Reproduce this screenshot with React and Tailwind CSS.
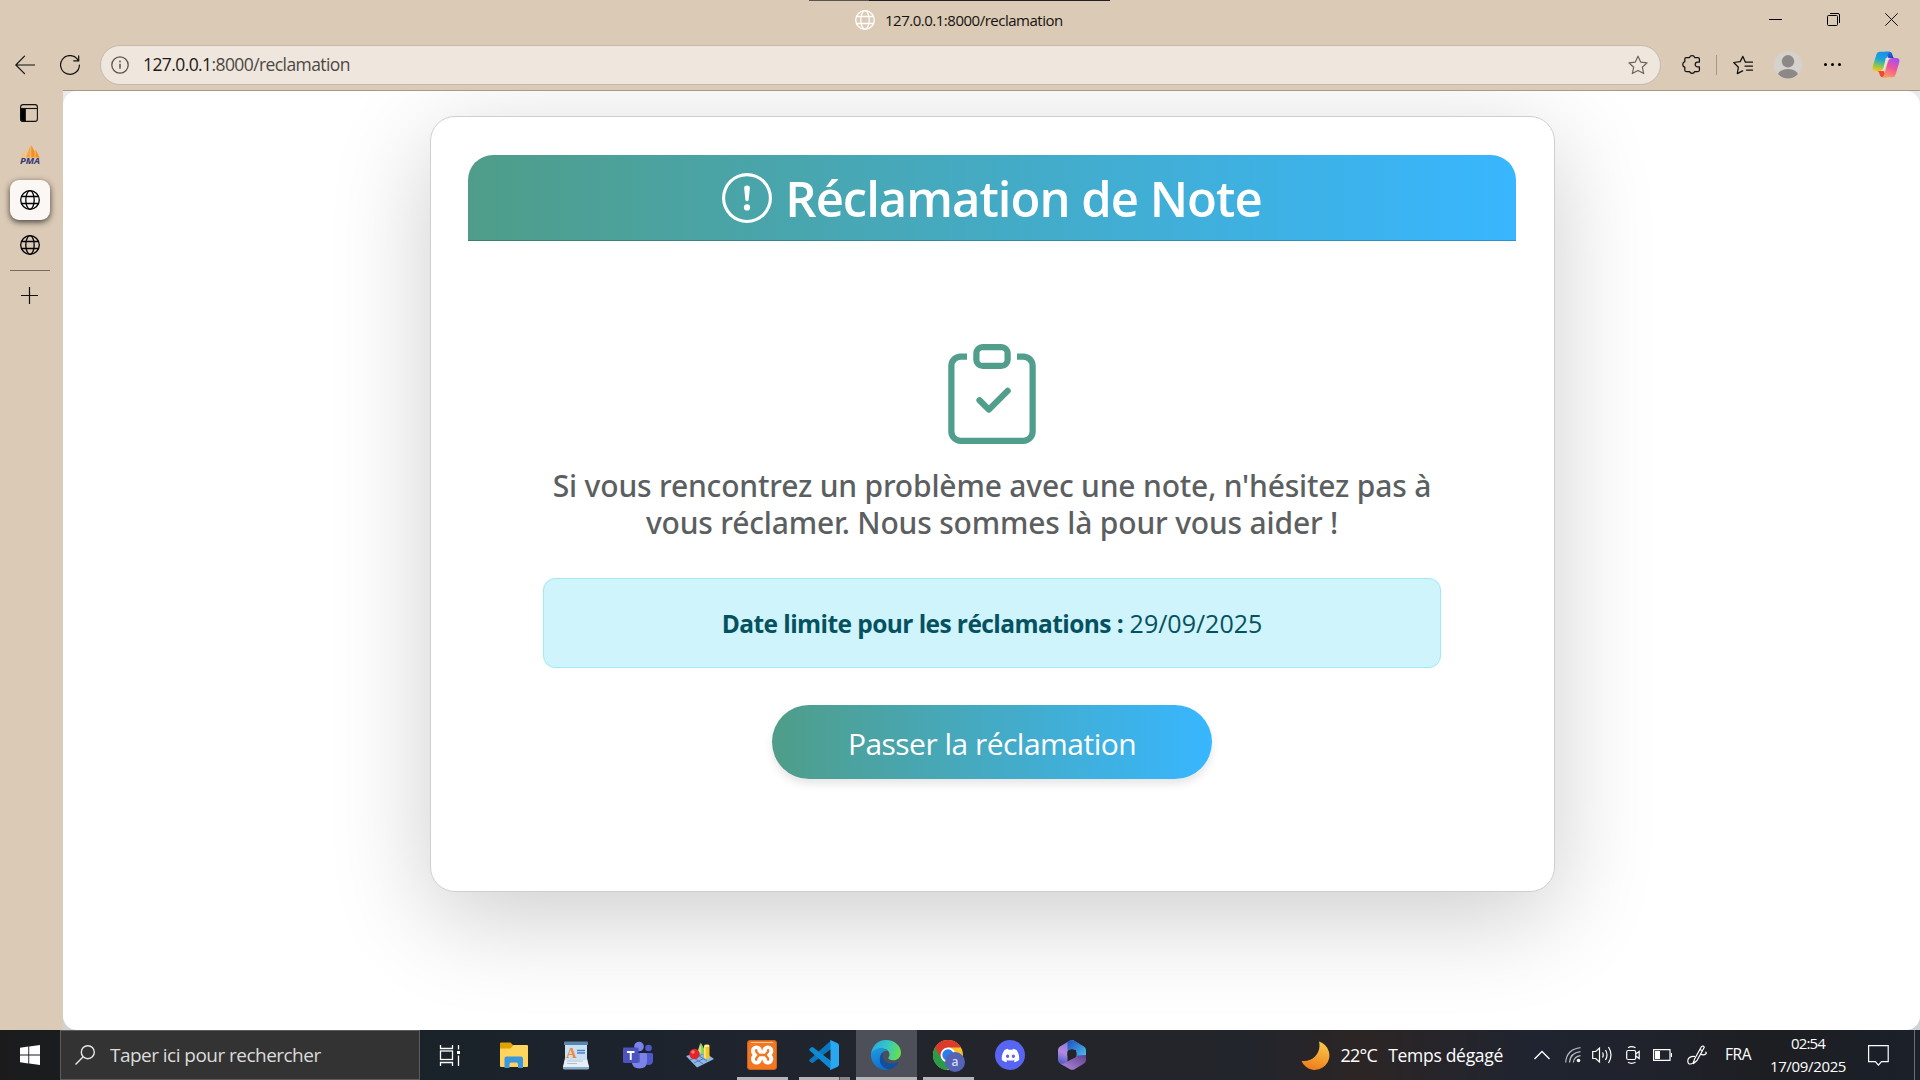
import React from 'react';
import { BsClipboardCheck, BsExclamationCircle } from 'react-icons/bs';
import { FaDiscord } from 'react-icons/fa6';

/* ---------- Browser icons ---------- */

function Globe({ className = '' }) {
  return (
    <svg viewBox="0 0 20 20" className={`size-5 shrink-0 ${className}`} fill="none" stroke="currentColor" strokeWidth="1.3">
      <circle cx="10" cy="10" r="9.3" />
      <ellipse cx="10" cy="10" rx="4.2" ry="9.3" />
      <path d="M1.3 6.5h17.4M1.3 13.5h17.4" />
    </svg>
  );
}

const STAR = 'M10 1.2l2.7 5.9 6.4.7-4.8 4.4 1.4 6.4L10 15.4l-5.7 3.2 1.4-6.4L.9 7.8l6.4-.7z';

function Back() {
  return (
    <svg viewBox="0 0 20 20" className="size-5" fill="none" stroke="#111" strokeWidth="1.2" strokeLinecap="round">
      <path d="M19.5 10H.8M9.5 1.2L.8 10l8.7 8.6" />
    </svg>
  );
}

function Reload() {
  return (
    <svg viewBox="0 0 20 20" className="size-5" fill="none" stroke="#111" strokeWidth="1.2" strokeLinecap="round">
      <path d="M19.4 10a9.4 9.4 0 1 1-2.2-6.1l1.4 1.7M18.7.8v5h-5" />
    </svg>
  );
}

function Info() {
  return (
    <svg viewBox="0 0 18 18" className="size-[18px]" fill="none" stroke="#5a554f" strokeWidth="1.3">
      <circle cx="9" cy="9" r="8.2" />
      <path d="M9 7.8v5" strokeWidth="1.5" />
      <circle cx="9" cy="5.4" r=".9" fill="#5a554f" stroke="none" />
    </svg>
  );
}

function Puzzle() {
  return (
    <svg viewBox="0 0 19 21" className="h-[21px] w-[19px]" fill="none" stroke="#111" strokeWidth="1.25" strokeLinejoin="round">
      <path d="M4.300 3.500h3.200a2.700 2.500 0 0 1 5.200 0h3.200q1.500 0 1.500 1.500v3h-1.800a2.400 2.400 0 0 0 0 4.800h1.800v3.200q0 1.500-1.500 1.500h-3.200a2.700 2.500 0 0 1-5.200 0H4.300q-1.500 0-1.500-1.500v-2.900a2.800 2.800 0 0 1 0-5.400V5q0-1.500 1.500-1.500z" />
    </svg>
  );
}

function Favorites() {
  return (
    <svg viewBox="0 0 20 20" className="size-5" fill="none" stroke="#111" strokeWidth="1.25" strokeLinejoin="round" strokeLinecap="round">
      <path d="M12.300 7L9.900 1.400 7.200 6.600.7 7.500l4.700 4.700-1.100 6.400 5.300-2.700" />
      <path d="M12.500 7h7M12 11h7.500M13.500 15h6" />
    </svg>
  );
}

function Copilot() {
  return (
    <svg viewBox="0 0 28 27" className="h-[27px] w-7">
      <defs>
        <linearGradient id="cp1" x1=".5" y1="0" x2=".3" y2="1">
          <stop offset="0" stopColor="#1d8fe8" /><stop offset=".4" stopColor="#1ba6d8" /><stop offset=".7" stopColor="#7cc55a" /><stop offset="1" stopColor="#f4c718" />
        </linearGradient>
        <linearGradient id="cp2" x1=".7" y1="0" x2=".3" y2="1">
          <stop offset="0" stopColor="#a44ff0" /><stop offset=".5" stopColor="#f0549b" /><stop offset="1" stopColor="#ff9c5a" />
        </linearGradient>
        <linearGradient id="cp3" x1="0" y1="0" x2="1" y2="1">
          <stop offset="0" stopColor="#1f80e8" /><stop offset="1" stopColor="#1b35c0" />
        </linearGradient>
      </defs>
      <path d="M13 .7h4.500q2 0 2.600 2l.8 2.900q.4 1.500 2 1.500h-6.500z" fill="url(#cp3)" />
      <path d="M15 26.300h-4.500q-2 0-2.600-2l-.8-2.900q-.4-1.500-2-1.500h6.500z" fill="#ee4b35" />
      <path d="M7.500.7H18q-1.700.8-2.400 3.400l-3.400 11.500q-1.300 4.300-5 4.300H3.500Q-.3 19.900.8 15.500L4.400 3.600Q5.200.7 7.500.7z" fill="url(#cp1)" />
      <path d="M20.500 26.300H10q1.700-.8 2.400-3.400l3.400-11.500q1.300-4.300 5-4.300h3.700q3.800 0 2.700 4.400l-3.600 11.900q-.8 2.900-3.100 2.900z" fill="url(#cp2)" />
      <path d="M13.800 7.100h4q-1.700.6-2.400 3l-2.300 7.700q-.7 2.100-2.500 2.100H9q1.700-.5 2.500-2.900z" fill="#efe2d2" />
    </svg>
  );
}

/* ---------- Browser chrome ---------- */

function TitleBar() {
  return (
    <div className="flex h-11 items-start">
      <div className="w-[809px]" />
      <div className="flex w-[301px] flex-col">
        <div className="flex h-px">
          <div className="w-[60px] bg-[#595552]" />
          <div className="flex-1 bg-[#201f24]" />
        </div>
        <div className="flex h-[38px] items-center pl-[46px]">
          <Globe className="text-white" />
          <span className="ml-[10px] whitespace-nowrap text-[15px] tracking-[-0.49px] text-[#151310]">127.0.0.1:8000/reclamation</span>
        </div>
      </div>
      <div className="ml-auto flex h-[38px] items-center gap-[45px] pr-[22px]">
        <div className="h-px w-[13px] bg-black" />
        <svg viewBox="0 0 13 13" className="size-[13px]" fill="none" stroke="#000">
          <rect x=".5" y="2.500" width="10" height="10" rx="1" />
          <path d="M3 .5h8q1.500 0 1.500 1.500v8" />
        </svg>
        <svg viewBox="0 0 13 13" className="size-[13px]" fill="none" stroke="#111"><path d="M.3.3l12.400 12.400M12.700.3L.3 12.700" /></svg>
      </div>
    </div>
  );
}

function Toolbar() {
  return (
    <div className="flex h-[46px] items-start pl-[15px] pt-px">
      <div className="flex h-[39px] items-center gap-[25px]"><Back /><Reload /></div>
      <div className="ml-5 flex h-10 w-[1561px] items-center rounded-full border border-[#c3b9af] bg-[#efe7de] pb-px pl-[10px] pr-[12px]">
        <Info />
        <span className="ml-[14px] pb-px text-[17.5px] leading-6 tracking-[-0.59px] text-[#4d4843]"><span className="text-[#1c1917]">127.0.0.1</span>:8000/reclamation</span>
        <svg viewBox="0 0 20 20" className="ml-auto size-5" fill="none" stroke="#6b655f" strokeWidth="1.2" strokeLinejoin="round"><path d={STAR} /></svg>
      </div>
      <div className="flex h-[39px] items-center">
        <div className="ml-[21px]"><Puzzle /></div>
        <div className="ml-[15px] h-5 w-px bg-[#a3968a]" />
        <div className="ml-4"><Favorites /></div>
        <svg viewBox="0 0 28 28" className="ml-[21px] size-7">
          <defs><clipPath id="avatar"><circle cx="14" cy="14" r="13.500" /></clipPath></defs>
          <circle cx="14" cy="14" r="14" fill="#d5d2ce" />
          <g clipPath="url(#avatar)" fill="#8c8885"><circle cx="14" cy="10.300" r="6.200" /><ellipse cx="14" cy="25" rx="10.500" ry="7" /></g>
        </svg>
        <div className="ml-[22px] flex gap-1">
          <i className="size-[3px] rounded-full bg-black" /><i className="size-[3px] rounded-full bg-black" /><i className="size-[3px] rounded-full bg-black" />
        </div>
        <div className="ml-[31px]"><Copilot /></div>
      </div>
    </div>
  );
}

function Sidebar() {
  return (
    <div className="flex w-[63px] shrink-0 flex-col items-center pr-[3px] pt-[14px]">
      <svg viewBox="0 0 18 18" className="mr-[2px] size-[18px]" fill="none" stroke="#111" strokeWidth="1.100">
        <rect x=".6" y=".6" width="16.800" height="16.800" rx="2.500" />
        <path d="M.6 4.500h16.800" />
        <path d="M.8 4.500h4.500v12.700H3q-2.200 0-2.200-2.200z" fill="#000" />
      </svg>
      <svg viewBox="0 0 20 20" className="mt-[23px] size-5">
        <path d="M1 12.500L5 3.500v9z" fill="#f9c27c" />
        <path d="M5.800 12.500L10.500.5v12z" fill="#f9a33d" />
        <path d="M11.200 12.500V0l3.500 6.500v6zM15.500 12.500V4.500l4.200 8z" fill="#fb8f1c" />
        <text x="0" y="18.800" textLength="20" lengthAdjust="spacingAndGlyphs" fontFamily="Open Sans, sans-serif" fontSize="8" fontWeight="700" fontStyle="italic" fill="#35396e">PMA</text>
      </svg>
      <div className="mt-[15px] flex size-10 items-center justify-center rounded-[9px] bg-[#fbf7f4] shadow-[0_2px_6px_rgba(0,0,0,0.7)]">
        <Globe />
      </div>
      <Globe className="mt-[15px]" />
      <div className="mt-[15px] h-px w-10 bg-[#766b60]" />
      <svg viewBox="0 0 17 17" className="mr-px mt-4 size-[17px]" fill="none" stroke="#111" strokeWidth="1.200"><path d="M8.500 0v17M0 8.500h17" /></svg>
    </div>
  );
}

/* ---------- Page ---------- */

function Page() {
  return (
    <main className="flex flex-1 bg-gradient-to-b from-[#e9e9ee] to-[#cfd1d4]">
      <div className="flex flex-1 items-start overflow-hidden rounded-[14px] bg-white">
        <section className="ml-[367px] mt-[25px] h-[776px] w-[1125px] rounded-[25px] border border-[#cfcfcf] bg-white pl-[37px] pr-[38px] pt-[38px] shadow-[0_25px_100px_rgba(0,0,0,0.2)]">
          <h1 className="flex h-[86px] items-start justify-center rounded-t-[25px] border-b border-black/20 bg-gradient-to-r from-[#4f9d89] to-[#38b6ff] bg-origin-border pt-[13px] text-[49px] font-semibold leading-[60px] tracking-[-1px] text-white">
            <BsExclamationCircle className="mr-[13px] mt-[5px] size-[50px]" />
            Réclamation de Note
          </h1>
          <div className="flex flex-col items-center pt-[103px]">
            <BsClipboardCheck className="size-[100px] text-[#509e8b]" />
            <p className="mt-[23px] text-center font-['Noto_Sans',sans-serif] text-[30px] font-medium leading-[37px] tracking-[-0.18px] text-[#5c5f61]">
              Si vous rencontrez un problème avec une note, n'hésitez pas à<br />vous réclamer. Nous sommes là pour vous aider !
            </p>
            <div className="mt-[37px] flex h-[90px] w-[898px] items-center justify-center rounded-[12px] border border-[#9eeaf9] bg-[#cff4fc] pt-[2px] text-[25px] text-[#055160]">
              <span><strong className="text-[24.5px] font-bold tracking-[-0.57px]">Date limite pour les réclamations :</strong> 29/09/2025</span>
            </div>
            <button className="mt-[37px] h-[74px] w-[440px] rounded-full bg-gradient-to-r from-[#4f9d89] to-[#38b6ff] pt-[2px] text-[30px] tracking-[-0.52px] text-white shadow-[0_5px_8px_rgba(0,0,0,0.1)]">
              Passer la réclamation
            </button>
          </div>
        </section>
      </div>
    </main>
  );
}

/* ---------- Taskbar ---------- */

function TaskView() {
  return (
    <svg viewBox="0 0 22 22" className="size-[22px]" fill="none" stroke="#fff" strokeWidth="1.300">
      <path d="M1.500 1v3.500h12V1M1.500 22v-3.500h12V22" />
      <rect x="1.500" y="7" width="12" height="8.500" />
      <path d="M19.500 1v4.500M19.500 11.500V22" />
      <path d="M18 7h3v3h-3z" fill="#fff" stroke="none" />
    </svg>
  );
}

function Explorer() {
  return (
    <svg viewBox="0 0 28 26" className="h-[26px] w-7">
      <path d="M0 1.500Q0 .5 1 .5h9.500l3 3H26V8H0z" fill="#e0a000" />
      <path d="M0 6.500h10.500l3-3.500H27q1 0 1 1v20q0 1-1 1H1q-1 0-1-1z" fill="#ffd45c" />
      <path d="M4.500 26V16.500q0-2 2-2h14.500q2 0 2 2V26h-5v-4q0-1.500-1.500-1.500h-5.500q-1.500 0-1.500 1.500v4z" fill="#3b97e0" />
    </svg>
  );
}

function Wordpad() {
  return (
    <svg viewBox="0 0 26 29" className="h-[29px] w-[26px]">
      <path d="M2 2h22v15l2 9H0l2-9z" fill="#c9e1f5" />
      <path d="M1 1.500q0-1 1-1h22q1 0 1 1V4H1z" fill="#5b86ab" />
      <path d="M2 19h22l2 7.500q0 1.500-1.500 1.500h-23Q0 28 0 26.500z" fill="#e6eff7" />
      <path d="M.2 26h25.600v1q0 1.500-1.500 1.500H1.700Q.2 28.500.2 27z" fill="#88abc9" />
      <text x="3" y="17" fontFamily="Liberation Serif, serif" fontWeight="700" fontSize="15" fill="#f08a3c">A</text>
      <path d="M14 9.500h8M14 12h8" stroke="#4c83c4" strokeWidth="1.300" />
      <path d="M4 20h16M4 22.500h10" stroke="#b4bfca" />
    </svg>
  );
}

function Teams() {
  return (
    <svg viewBox="0 0 30 28" className="h-7 w-[30px]">
      <circle cx="25.500" cy="7" r="3.300" fill="#5059c9" />
      <path d="M20 12h8.500q1.500 0 1.500 1.500v6q0 4-4 4.500-4 0-6-4z" fill="#5059c9" />
      <circle cx="16" cy="5.500" r="4.800" fill="#7b83eb" />
      <path d="M9.500 12h13q1.500 0 1.500 1.500v7q0 7-7.500 7T8.500 20z" fill="#7b83eb" />
      <path d="M7 12h10v9.500H7z" fill="#5c64c8" />
      <rect x="0" y="6.500" width="15.500" height="15.500" rx="1.300" fill="#4b53bc" />
      <path d="M4 11h7.500M7.750 11v8" stroke="#fff" strokeWidth="1.900" />
    </svg>
  );
}

function Geometry() {
  return (
    <svg viewBox="0 0 28 26" className="h-[26px] w-7">
      <path d="M0 14l17-5 11 8-17 8.500z" fill="#8db6e4" />
      <path d="M5 14l12 8M10 12l11 7M4 18l15-7M8 21l15-7" stroke="#4d7fbf" strokeWidth="1" />
      <path d="M15 1l5 9q-3 4-7 1.500z" fill="#8fd055" />
      <path d="M14.500.5l1 11-4-1.500z" fill="#bde58a" />
      <circle cx="8.500" cy="12" r="5.200" fill="#e0262c" />
      <circle cx="7" cy="10" r="1.800" fill="#f5797b" />
      <path d="M18 4v12q2.800 1.800 5.500 0V4z" fill="#f4c425" />
      <path d="M18 4v12l1.800.8V4z" fill="#fbe37d" />
      <ellipse cx="20.800" cy="3.800" rx="2.750" ry="1.300" fill="#fff0a3" />
    </svg>
  );
}

function Xampp() {
  return (
    <svg viewBox="0 0 30 30" className="size-[30px]">
      <rect x=".5" y=".5" width="29" height="29" rx="2.500" fill="#f37623" stroke="#c5641f" />
      <path d="M4 2.500h22" stroke="#fbc79c" />
      <g fill="#fff">
        <circle cx="9.500" cy="11" r="5.500" /><circle cx="20.800" cy="11" r="5.500" />
        <circle cx="9.500" cy="19" r="5.500" /><circle cx="20.800" cy="19" r="5.500" />
        <path d="M8 10.500h14.500v9H8z" />
      </g>
      <path d="M9.200 10.200v1.300l2.800 3.500-2.800 3.500v1.300M21.100 10.200v1.300L18.300 15l2.800 3.500v1.300M12 15h6.300" fill="none" stroke="#f37623" strokeWidth="2.300" strokeLinecap="round" strokeLinejoin="round" />
    </svg>
  );
}

function VsCode() {
  return (
    <svg viewBox="0 0 30 30" className="size-[30px]">
      <path d="M.6 19.500L22 .5V9L4 22.700q-.8.600-1.600 0l-1.700-1.500q-.9-.8-.1-1.700z" fill="#0b78bd" />
      <path d="M.6 10.500L22 29.500V21L4 7.300q-.8-.6-1.600 0L.7 8.800q-.9.800-.1 1.700z" fill="#1089d3" />
      <path d="M22 .2l6.600 3q1.400.7 1.400 2.200v19.200q0 1.500-1.400 2.200l-6.600 3q-.8 0-1.400-.600.900.3.900-1V1.800q0-1.300-.9-1Z" fill="#29a7f2" />
    </svg>
  );
}

function Edge() {
  return (
    <svg viewBox="0 0 30 30" className="size-[30px]">
      <defs>
        <linearGradient id="eg1" x1="0" y1=".3" x2="1" y2=".5"><stop offset="0" stopColor="#2aa9e6" /><stop offset=".5" stopColor="#34c6c8" /><stop offset="1" stopColor="#66e04c" /></linearGradient>
        <linearGradient id="eg2" x1="0" y1="0" x2=".4" y2="1"><stop offset="0" stopColor="#1e9de0" /><stop offset="1" stopColor="#0f6fcf" /></linearGradient>
      </defs>
      <path d="M0 14.500C.5 6 7 0 15 0c9 0 15 6.200 15 12.500 0 4.800-3.500 7.800-7.800 7.800-3.200 0-4.900-1.200-4.900-2.300 0-.8 1.200-1.200 1.200-3.500 0-3-2.700-6-7.500-6C5.500 8.500 1.500 11 0 14.500z" fill="url(#eg1)" />
      <path d="M0 14.500C1 10.500 5 8.200 9.500 8.200c3 0 5.500 1 7 2.500-4-.5-7.500 2.800-7.500 7.300 0 6 4.500 11 9.500 11.500-1 .3-2 .5-3.500.5C6.500 30-.3 23 0 14.500z" fill="url(#eg2)" />
      <path d="M12.300 13C9.800 14.300 8.700 17 8.700 19.500c0 5 4.300 9.800 9.800 10 3.500-.8 7-3.300 8.800-6.500.4-.7-.2-1.100-.8-.8-7 3.300-14.500 0-14.500-5.700 0-1.400 0-2.500.3-3.500z" fill="#134f9c" />
    </svg>
  );
}

function Chrome() {
  return (
    <svg viewBox="0 0 32 32" className="ml-[2px] mt-[2px] size-8">
      <circle cx="15" cy="15" r="15" fill="#f9c12a" />
      <path d="M15 15L2 7.500A15 15 0 0 0 14 30l7-12z" fill="#2a9b46" />
      <path d="M15 15V7.500h13A15 15 0 0 0 2 7.500L8.500 18.800z" fill="#dc3a2c" />
      <circle cx="15" cy="15" r="7.500" fill="#fff" />
      <circle cx="15" cy="15" r="5.700" fill="#2b7de9" />
      <circle cx="22" cy="22" r="10" fill="#5463b5" />
      <text x="22" y="26" textAnchor="middle" fontFamily="Open Sans, sans-serif" fontWeight="600" fontSize="12" fill="#d7dcf5">a</text>
    </svg>
  );
}

function Discord() {
  return (
    <div className="flex size-[30px] items-center justify-center rounded-full bg-[#5865f2]">
      <FaDiscord className="size-[19px] text-white" />
    </div>
  );
}

function Office() {
  return (
    <svg viewBox="0 0 28 30" className="h-[30px] w-7">
      <defs>
        <linearGradient id="of1" x1=".5" y1="0" x2=".3" y2="1"><stop offset="0" stopColor="#7f78d8" /><stop offset=".5" stopColor="#b58ae0" /><stop offset="1" stopColor="#3a54c8" /></linearGradient>
        <linearGradient id="of2" x1="0" y1="0" x2="1" y2="1"><stop offset="0" stopColor="#1f4ec0" /><stop offset="1" stopColor="#4fc3f0" /></linearGradient>
        <linearGradient id="of3" x1="1" y1="0" x2="0" y2="1"><stop offset="0" stopColor="#5c418f" /><stop offset="1" stopColor="#b78be0" /></linearGradient>
      </defs>
      <path d="M12 .6L2 6.500Q0 7.700 0 10v10q0 2.300 2 3.500l5 2.500 2.500-2V11l6.500-5V.3q-2-.8-4 .3z" fill="url(#of1)" />
      <path d="M9.500 2L13 .3Q15 0 17 1l9 5.500q2 1.200 2 3.500v8.500l-10-2V10H9.500z" fill="url(#of2)" />
      <path d="M28 15v5q0 2.300-2 3.500l-9.500 5.700q-2.300 1.200-4.500 0L2 23.500q3 1 5.500-1L14 19l5-3.500z" fill="url(#of3)" />
      <circle cx="14" cy="14" r="4.700" fill="#23252b" />
    </svg>
  );
}

const apps = [
  { icon: Explorer }, { icon: Wordpad }, { icon: Teams }, { icon: Geometry },
  { icon: Xampp, bar: true }, { icon: VsCode, bar: true, stacked: true }, { icon: Edge, active: true },
  { icon: Chrome, bar: true }, { icon: Discord }, { icon: Office },
];

function TaskApp({ icon: Icon, bar, stacked, active }) {
  return (
    <div className="flex h-full w-[62px] flex-col items-center">
      <div className={`flex h-[47px] w-[61px] shrink-0 items-center justify-center pt-[3px] ${active ? 'bg-[#4d5059]' : ''}`}><Icon /></div>
      {active && <div className="h-[3px] w-[61px] bg-[#b5b4b8]" />}
      {bar && (
        <div className="flex h-[3px] w-[51px] bg-[#b5b4b8]">
          {stacked && <div className="ml-auto w-[11px] border-l border-[#555] bg-[#86868a]" />}
        </div>
      )}
    </div>
  );
}

function Moon() {
  return (
    <svg viewBox="0 0 29 29" className="size-[29px]">
      <defs><linearGradient id="mn" x1=".7" y1="0" x2=".4" y2="1"><stop offset="0" stopColor="#fbc94a" /><stop offset="1" stopColor="#ee7c1c" /></linearGradient></defs>
      <path d="M18 .5a14.500 14.500 0 1 1-17.500 19.500q1 .1 2.500.1C13 20 20.500 11 18 .5z" fill="url(#mn)" />
    </svg>
  );
}

function Tray() {
  return (
    <div className="flex h-full items-center text-white">
      <svg viewBox="0 0 16 10" className="mr-[15px] h-[10px] w-4" fill="none" stroke="#fff" strokeWidth="1.300"><path d="M.5 9L8 1.500 15.500 9" /></svg>
      <svg viewBox="0 0 16 16" className="mr-[11px] size-4" fill="none" stroke="#b9bbc0" strokeWidth="1.200">
        <path d="M.7 15.500Q1.500 2.500 15.500.7M4.500 15.500Q5 6 15.500 4.700M8.300 15.500Q9 9.500 15.500 8.700" />
        <circle cx="13.500" cy="13.500" r="1.800" fill="#fff" stroke="none" />
      </svg>
      <svg viewBox="0 0 20 18" className="mr-[14px] h-[18px] w-5" fill="none" stroke="#fff" strokeWidth="1.200">
        <path d="M.7 5.500h3L7.500 2v14l-3.800-3.500h-3z" />
        <path d="M10.500 6.500q1.500 2.500 0 5M13.500 4q3 5 0 10M16.500 1q5 8 0 16" />
      </svg>
      <svg viewBox="0 0 14 18" className="mr-[13px] h-[18px] w-[14px]" fill="none" stroke="#fff" strokeWidth="1.200">
        <rect x=".7" y="4.500" width="9" height="9" rx="1.500" />
        <path d="M9.700 8l3.500-2.500v7L9.700 10M2 1.700Q5.500-.3 9.500 1.700M2 16.300q3.500 2 7.500 0" />
      </svg>
      <svg viewBox="0 0 19 12" className="mr-[15px] h-3 w-[19px]" fill="none" stroke="#fff" strokeWidth="1.200">
        <path d="M.6.6h16.400v10.800H.6z" /><path d="M2 2h5v8H2z" fill="#fff" stroke="none" /><path d="M18.400 4v4" />
      </svg>
      <svg viewBox="0 0 20 20" className="mr-[18px] size-5" fill="none" stroke="#fff" strokeWidth="1.200" strokeLinejoin="round">
        <path d="M6.500 18.500l.8-4L14.500 1.500q1.800-1 2.800.8L10 15.500z" />
        <path d="M13 4.500l2.800 1.500" />
        <path d="M8 11.500Q1.500 11 .8 15.500q-.2 3.800 3 3.500 2.700-.4 3.200-3M13.500 9q3 2 5.700-.5.300-1.500-1-1.500" />
      </svg>
      <span className="w-[27px] text-[15.5px] tracking-[-0.4px]">FRA</span>
      <div className="ml-[16px] flex w-[80px] flex-col items-center whitespace-nowrap pb-px text-[15px] leading-[23px]">
        <span className="tracking-[-0.8px]">02:54</span>
        <span className="tracking-[-0.34px]">17/09/2025</span>
      </div>
      <svg viewBox="0 0 21 21" className="ml-[20px] mr-[25px] size-[21px]" fill="none" stroke="#fff" strokeWidth="1.200"><path d="M.6.600h19.600v16h-6.700l-3.100 3.500-3-3.500H.6z" /></svg>
      <div className="h-full w-[6px] border-l border-[#6b6c70]" />
    </div>
  );
}

function Taskbar() {
  return (
    <div className="flex h-[50px] items-center bg-[linear-gradient(90deg,#1b1b1c_0%,#1a1d20_4%,#1a222a_23%,#1f242e_40%,#23252c_50%,#24252a_60%,#22252c_65%,#2c2525_71%,#1f2430_80%,#20222b_87%,#1d1e21_92%,#1b202a_100%)]">
      <div className="flex w-[60px] justify-center">
        <svg viewBox="0 0 20 20" className="size-5" fill="#fff"><path d="M0 2.800l8.300-1.200v8H0zM9.200 1.500L20 0v9.600H9.200zM0 10.400h8.300v8L0 17.200zM9.200 10.400H20V20L9.200 18.500z" /></svg>
      </div>
      <div className="flex h-full w-[360px] items-center border border-[#5c5c5c] bg-[#333] pl-[14px]">
        <svg viewBox="0 0 20 20" className="size-5" fill="none" stroke="#e8e8e8" strokeWidth="1.400"><circle cx="12.800" cy="7.200" r="6.500" /><path d="M8.200 11.800L.5 19.500" /></svg>
        <span className="ml-[15px] text-[19px] tracking-[-0.53px] text-[#dcdcdc]">Taper ici pour rechercher</span>
      </div>
      <div className="flex w-[63px] justify-center pr-[3px]"><TaskView /></div>
      {apps.map((app, i) => <TaskApp key={i} {...app} />)}
      <div className="ml-auto flex h-full items-center text-white">
        <Moon />
        <span className="ml-[10px] text-[18px] tracking-[-0.7px]">22°C</span>
        <span className="ml-[11px] mr-[31px] text-[17.5px] tracking-[-0.3px]">Temps dégagé</span>
        <Tray />
      </div>
    </div>
  );
}

export default function App() {
  return (
    <div className="flex h-[1080px] w-[1920px] flex-col overflow-hidden bg-[#dbcab5] font-['Open_Sans',sans-serif] text-black">
      <TitleBar />
      <Toolbar />
      <div className="flex min-h-0 flex-1">
        <Sidebar />
        <div className="flex flex-1 flex-col border-t border-[#ab9885]"><Page /></div>
      </div>
      <Taskbar />
    </div>
  );
}
